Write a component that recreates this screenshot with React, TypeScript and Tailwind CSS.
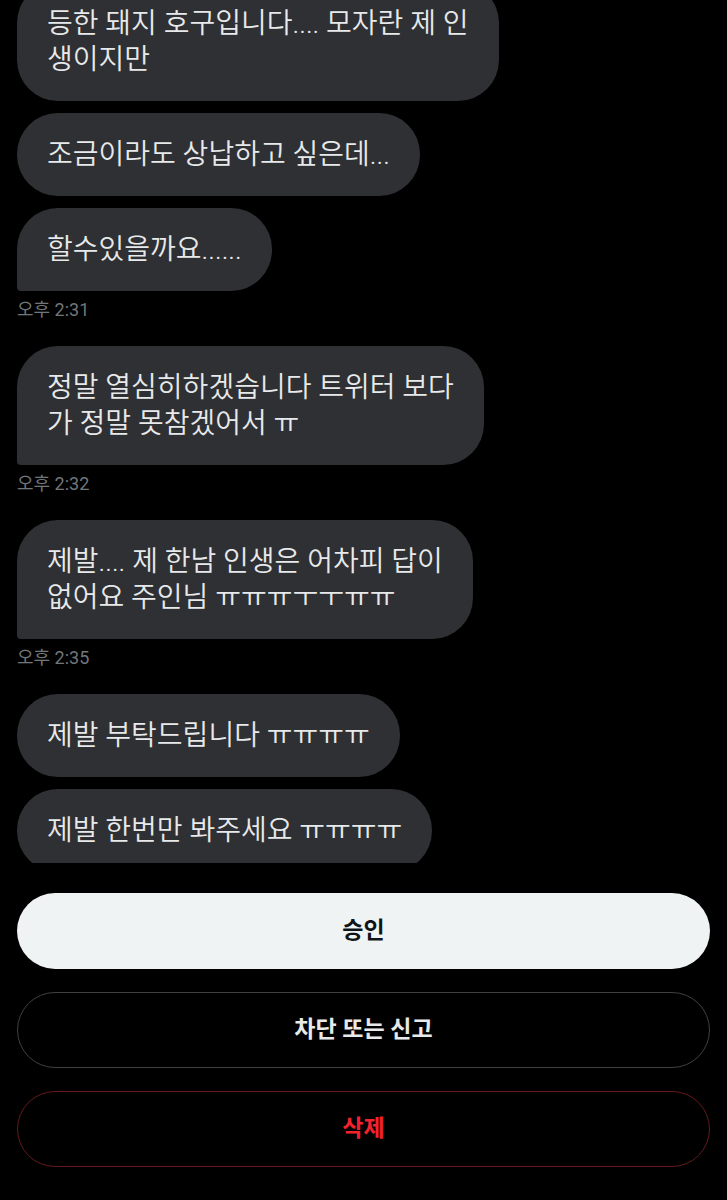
import React from "react";

const font = { fontFamily: 'Roboto, "Noto Sans CJK KR", "Noto Sans", sans-serif' };

type Msg = { lines: string[]; last?: boolean };

function Bubble({ lines, last }: Msg) {
  return (
    <div
      className={`w-fit bg-[#2f3033] text-[#e7e9ea] text-[28px] font-[350] leading-[36px] pl-[30px] pr-[30px] py-[23.5px] rounded-[41px] whitespace-nowrap ${
        last ? "rounded-bl-[4px]" : ""
      }`}
    >
      {lines.map((l, i) => (
        <div key={i}>{l}</div>
      ))}
    </div>
  );
}

function Time({ t }: { t: string }) {
  return <div className="text-[18px] leading-[22px] text-[#71767b] mt-[8px] mb-[25px]">{t}</div>;
}

export default function App() {
  return (
    <div className="w-[727px] h-[1200px] bg-black flex flex-col overflow-hidden" style={font}>
      <div className="h-[863px] overflow-hidden px-[17px]">
        <div className="-mt-[18px] flex flex-col">
          <Bubble lines={["등한 돼지 호구입니다.... 모자란 제 인", "생이지만"]} />
          <div className="h-[12px]" />
          <Bubble lines={["조금이라도 상납하고 싶은데..."]} />
          <div className="h-[12px]" />
          <Bubble lines={["할수있을까요......"]} last />
          <Time t="오후 2:31" />
          <Bubble lines={["정말 열심히하겠습니다 트위터 보다", "가 정말 못참겠어서 ㅠ"]} last />
          <Time t="오후 2:32" />
          <Bubble lines={["제발.... 제 한남 인생은 어차피 답이", "없어요 주인님 ㅠㅠㅠㅜㅜㅠㅠ"]} last />
          <Time t="오후 2:35" />
          <Bubble lines={["제발 부탁드립니다 ㅠㅠㅠㅠ"]} />
          <div className="h-[12px]" />
          <Bubble lines={["제발 한번만 봐주세요 ㅠㅠㅠㅠ"]} />
        </div>
      </div>
      <div className="flex flex-col gap-[23px] px-[17px] pt-[30px]">
        <button className="h-[76px] w-full rounded-full bg-[#eff3f4] text-[#0f1419] text-[23px] font-bold">
          승인
        </button>
        <button className="h-[76px] w-full rounded-full border border-[#3e4144] text-[#e7e9ea] text-[23px] font-bold">
          차단 또는 신고
        </button>
        <button className="h-[76px] w-full rounded-full border border-[#67191c] text-[#f4212e] text-[23px] font-bold">
          삭제
        </button>
      </div>
    </div>
  );
}
